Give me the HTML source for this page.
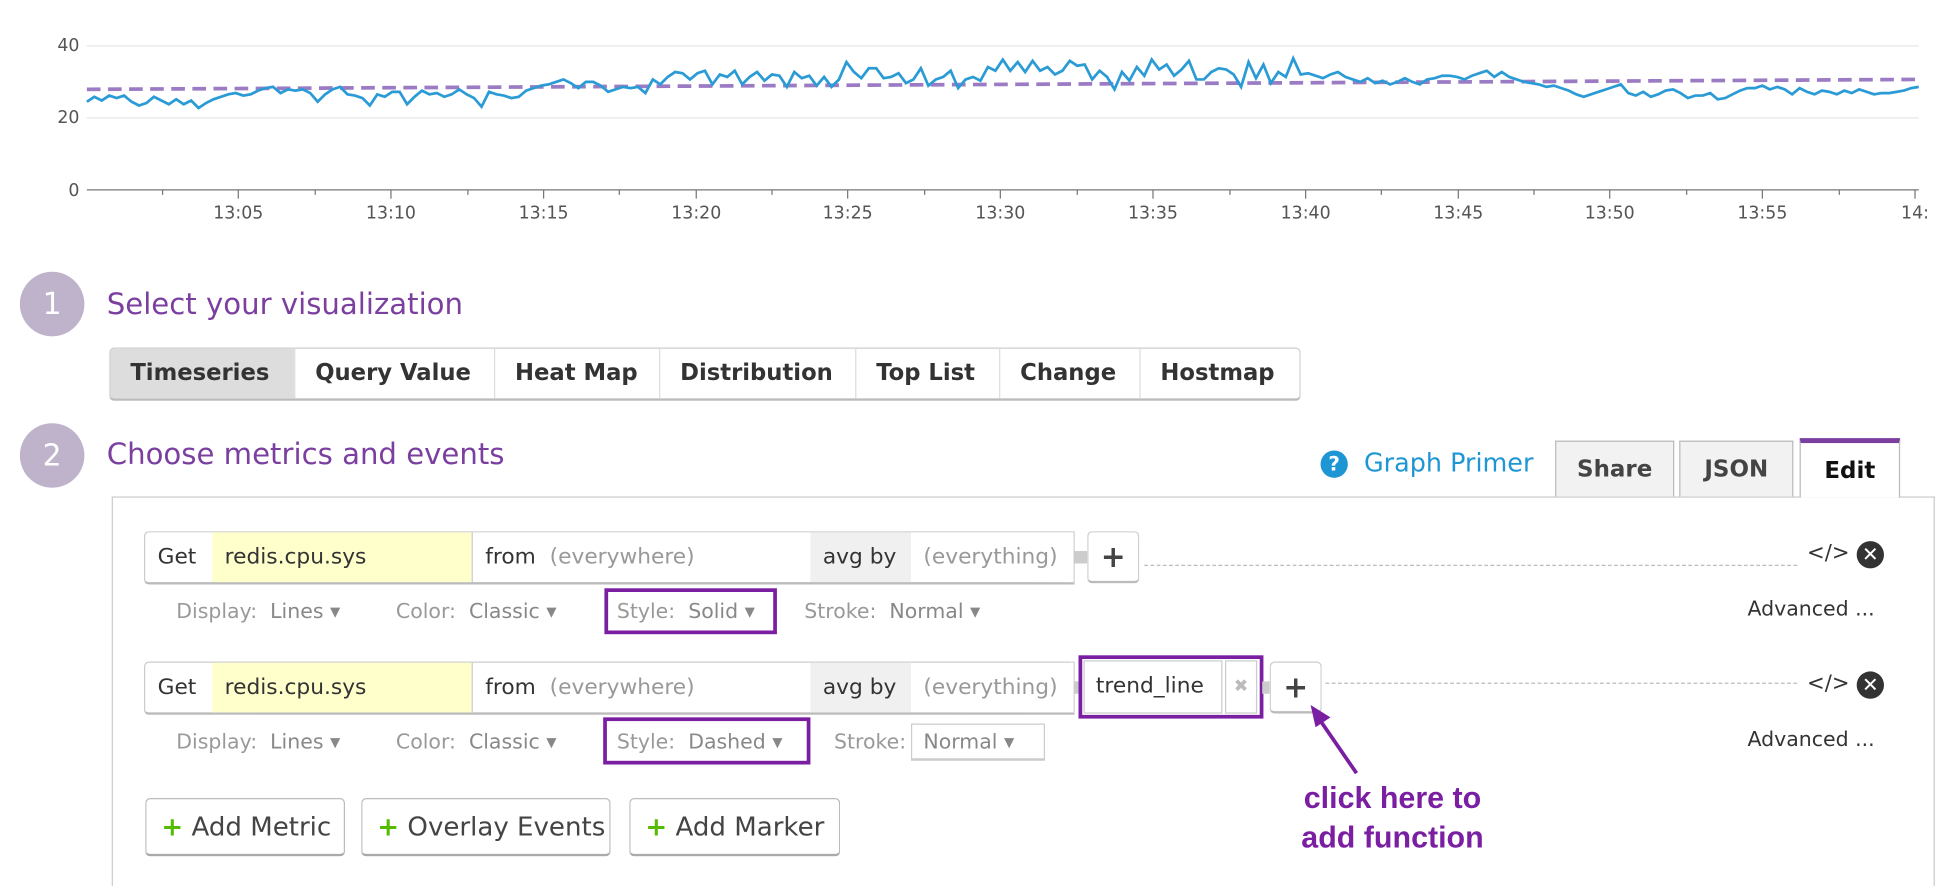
<!DOCTYPE html>
<html><head><meta charset="utf-8"><style>
html,body{margin:0;padding:0;background:#fff;overflow:hidden}
body{width:1946px;height:886px;position:relative}
#s{position:absolute;left:0;top:0;width:1568px;height:714px;overflow:hidden;transform:scale(1.2411);transform-origin:0 0;font-family:"DejaVu Sans","Liberation Sans",sans-serif;color:#333}
.a{position:absolute}
.circ{width:52px;height:52px;border-radius:50%;background:#bfb3cc;color:#fff;font-size:24px;text-align:center;line-height:52px}
.h{font-size:23.5px;color:#7b3fa0;white-space:nowrap}
.tabs{left:88px;top:280px;height:40px;border:1px solid #ccc;border-bottom:2px solid #bbb;border-radius:4px;display:flex;overflow:hidden}
.tabs div{font-weight:bold;font-size:18.3px;line-height:40px;padding:0 0 0 16px;border-left:1px solid #ddd;white-space:nowrap}
.tabs div:first-child{border-left:none;background:#ddd}
.tab{top:355px;height:45px;border:1px solid #bbb;border-bottom:none;background:#f2f2f2;font-weight:bold;font-size:18.5px;text-align:center;line-height:46px;box-sizing:border-box;color:#444}
.row{position:absolute;left:116px;height:40px;border:1px solid #ccc;border-bottom:2px solid #bbb;border-radius:4px 0 0 4px;display:flex;font-size:17.5px;line-height:40px;box-sizing:content-box;width:748px}
.row div{height:40px;white-space:nowrap;box-sizing:border-box;padding-left:10px}
.g{color:#999}
.opt{position:absolute;font-size:16.5px;color:#999;white-space:nowrap;line-height:20px}
.opt b{font-weight:normal;color:#888}
.pb{position:absolute;border:1px solid #ccc;border-bottom:2px solid #bbb;border-radius:4px;background:#fff;box-sizing:border-box;text-align:center;font-weight:bold;font-size:24px;color:#444}
.dot{position:absolute;height:0;border-top:1px dashed #bbb}
.pur{position:absolute;border:3px solid #7a1fa2;box-sizing:border-box}
.btn{position:absolute;top:643px;height:47px;border:1px solid #bbb;border-bottom:2px solid #aaa;border-radius:4px;box-sizing:border-box;font-size:21px;line-height:44px;padding-left:12px;white-space:nowrap;color:#444}
.btn span{color:#5b0;font-weight:bold}
.xc{position:absolute;width:22px;height:22px;border-radius:50%;background:#333;color:#fff;font-size:16px;font-weight:bold;text-align:center;line-height:22px}
</style></head><body><div id="s">
<svg class="a" style="left:0;top:0" width="1568" height="190">
<g font-family="DejaVu Sans,Liberation Sans,sans-serif" font-size="14" fill="#555">
<text x="64" y="41" text-anchor="end">40</text>
<text x="64" y="99" text-anchor="end">20</text>
<text x="64" y="158" text-anchor="end">0</text>
</g>
<line x1="70" y1="37" x2="1546" y2="37" stroke="#eee" stroke-width="1.5"/>
<line x1="70" y1="95" x2="1546" y2="95" stroke="#eee" stroke-width="1.5"/>
<line x1="70" y1="153" x2="1546" y2="153" stroke="#777" stroke-width="1"/>
<g stroke="#777" stroke-width="1">
<line x1="131" y1="153" x2="131" y2="157"/><line x1="192" y1="153" x2="192" y2="160"/><line x1="254" y1="153" x2="254" y2="157"/><line x1="315" y1="153" x2="315" y2="160"/><line x1="377" y1="153" x2="377" y2="157"/><line x1="438" y1="153" x2="438" y2="160"/><line x1="499" y1="153" x2="499" y2="157"/><line x1="561" y1="153" x2="561" y2="160"/><line x1="622" y1="153" x2="622" y2="157"/><line x1="683" y1="153" x2="683" y2="160"/><line x1="745" y1="153" x2="745" y2="157"/><line x1="806" y1="153" x2="806" y2="160"/><line x1="868" y1="153" x2="868" y2="157"/><line x1="929" y1="153" x2="929" y2="160"/><line x1="991" y1="153" x2="991" y2="157"/><line x1="1052" y1="153" x2="1052" y2="160"/><line x1="1113" y1="153" x2="1113" y2="157"/><line x1="1175" y1="153" x2="1175" y2="160"/><line x1="1236" y1="153" x2="1236" y2="157"/><line x1="1297" y1="153" x2="1297" y2="160"/><line x1="1359" y1="153" x2="1359" y2="157"/><line x1="1420" y1="153" x2="1420" y2="160"/><line x1="1482" y1="153" x2="1482" y2="157"/><line x1="1543" y1="153" x2="1543" y2="160"/>
</g>
<g font-family="DejaVu Sans,Liberation Sans,sans-serif" font-size="14" fill="#555" text-anchor="middle">
<text x="192" y="176">13:05</text><text x="315" y="176">13:10</text><text x="438" y="176">13:15</text><text x="561" y="176">13:20</text><text x="683" y="176">13:25</text><text x="806" y="176">13:30</text><text x="929" y="176">13:35</text><text x="1052" y="176">13:40</text><text x="1175" y="176">13:45</text><text x="1297" y="176">13:50</text><text x="1420" y="176">13:55</text><text x="1543" y="176">14:</text>
</g>
<line x1="70" y1="72" x2="1546" y2="64" stroke="#9b7cc4" stroke-width="3" stroke-dasharray="11,6"/>
<polyline fill="none" stroke="#2b9bd6" stroke-width="2.2" points="70,82 76,78 82,81 88,77 94,79 100,77 106,82 112,85 118,83 124,78 130,81 136,84 142,80 148,84 154,81 160,87 166,83 172,80 178,78 184,76 190,75 196,77 202,76 208,73 214,71 220,70 226,75 232,72 238,73 244,72 250,75 256,82 262,76 268,72 274,70 280,76 286,77 292,79 298,85 304,76 310,78 316,74 322,74 328,84 334,78 340,73 346,76 352,75 358,78 364,76 370,72 376,76 382,79 388,86 394,74 400,76 406,77 412,79 418,78 424,73 430,71 436,69 442,68 448,66 454,64 460,67 466,71 472,66 478,66 484,69 490,74 496,72 502,70 508,71 514,70 520,75 526,64 532,68 538,62 544,58 550,59 556,64 562,59 568,57 574,68 580,60 586,62 592,57 598,68 604,62 610,58 616,65 622,60 628,61 634,70 640,58 646,63 652,61 658,69 664,62 670,70 676,64 682,50 688,58 694,63 700,55 706,55 712,63 718,62 724,59 730,67 736,64 742,55 748,69 754,64 760,62 766,57 772,71 778,64 784,62 790,65 796,54 802,57 808,48 814,57 820,50 826,58 832,49 838,57 844,54 850,60 856,57 862,49 868,53 874,52 880,64 886,57 892,62 898,72 904,58 910,65 916,54 922,61 928,48 934,56 940,52 946,61 952,56 958,49 964,64 970,64 976,58 982,55 988,56 994,60 1000,70 1006,50 1012,63 1018,52 1024,67 1030,58 1036,62 1042,47 1048,60 1054,59 1060,61 1066,63 1072,60 1078,58 1084,62 1090,64 1096,66 1102,63 1108,67 1114,65 1120,68 1126,66 1132,63 1138,66 1144,68 1150,64 1156,63 1162,61 1168,61 1174,62 1180,64 1186,61 1192,59 1198,57 1204,62 1210,58 1216,62 1222,64 1228,66 1234,67 1240,68 1246,70 1252,69 1258,71 1264,73 1270,76 1276,78 1282,76 1288,74 1294,72 1300,70 1306,68 1312,75 1318,77 1324,74 1330,78 1336,76 1342,73 1348,72 1354,75 1360,79 1366,77 1372,77 1378,75 1384,80 1390,79 1396,76 1402,73 1408,71 1414,71 1420,69 1426,72 1432,70 1438,72 1444,76 1450,71 1456,74 1462,76 1468,73 1474,74 1480,76 1486,73 1492,75 1498,72 1504,74 1510,76 1516,75 1522,75 1528,74 1534,73 1540,71 1546,70"/>
</svg>

<div class="a circ" style="left:16px;top:219px">1</div>
<div class="a h" style="left:86px;top:231px">Select your visualization</div>
<div class="a tabs"><div style="width:148px;box-sizing:border-box">Timeseries</div><div style="width:161px;box-sizing:border-box">Query Value</div><div style="width:133px;box-sizing:border-box">Heat Map</div><div style="width:158px;box-sizing:border-box">Distribution</div><div style="width:116px;box-sizing:border-box">Top List</div><div style="width:113px;box-sizing:border-box">Change</div><div style="width:129px;box-sizing:border-box">Hostmap</div></div>

<div class="a circ" style="left:16px;top:341px">2</div>
<div class="a h" style="left:86px;top:352px">Choose metrics and events</div>
<div class="a" style="left:1064px;top:363px;width:22px;height:22px;border-radius:50%;background:#1e96d4;color:#fff;font-weight:bold;font-size:16px;text-align:center;line-height:22px">?</div>
<div class="a" style="left:1099px;top:361px;font-size:20.5px;color:#1e96d4;white-space:nowrap">Graph Primer</div>

<div class="a" style="left:90px;top:400px;width:1469px;height:314px;border:1px solid #ccc;border-bottom:none;box-sizing:border-box"></div>
<div class="a tab" style="left:1253px;width:96px">Share</div>
<div class="a tab" style="left:1353px;width:92px">JSON</div>
<div class="a tab" style="left:1450px;top:353px;height:48px;width:81px;background:#fff;border-top:4px solid #7b3fa0;color:#111;line-height:46px">Edit</div>

<div class="row" style="top:428px"><div style="width:54px">Get</div><div style="width:209px;background:#ffffcc">redis.cpu.sys</div><div style="width:273px;border-left:1px solid #ccc">from <span class="g">&nbsp;(everywhere)</span></div><div style="width:81px;background:#f0f0f0">avg by</div><div style="width:131px" class="g">(everything)</div></div>
<div class="a" style="left:865px;top:444px;width:11px;height:10px;background:#ccc"></div>
<div class="pb" style="left:876px;top:428px;width:42px;height:42px;line-height:40px">+</div>
<div class="dot" style="left:922px;top:455px;width:526px"></div>
<div class="a" style="left:1456px;top:436px;font-size:17px;color:#333">&lt;/&gt;</div>
<div class="xc" style="left:1496px;top:436px">✕</div>
<div class="opt" style="left:142px;top:483px">Display: &nbsp;<b>Lines ▾</b></div>
<div class="opt" style="left:319px;top:483px">Color: &nbsp;<b>Classic ▾</b></div>
<div class="pur" style="left:487px;top:474px;width:139px;height:37px"></div>
<div class="opt" style="left:497px;top:483px">Style: &nbsp;<b>Solid ▾</b></div>
<div class="opt" style="left:648px;top:483px">Stroke: &nbsp;<b>Normal ▾</b></div>
<div class="opt" style="left:1408px;top:481px;color:#333">Advanced ...</div>

<div class="row" style="top:533px"><div style="width:54px">Get</div><div style="width:209px;background:#ffffcc">redis.cpu.sys</div><div style="width:273px;border-left:1px solid #ccc">from <span class="g">&nbsp;(everywhere)</span></div><div style="width:81px;background:#f0f0f0">avg by</div><div style="width:131px" class="g">(everything)</div></div>
<div class="a" style="left:865px;top:549px;width:6px;height:10px;background:#ccc"></div>
<div class="pur" style="left:869px;top:528px;width:149px;height:51px"></div>
<div class="a" style="left:873px;top:532px;width:112px;height:43px;border:1px solid #ccc;box-sizing:border-box;font-size:17.5px;line-height:41px;padding-left:9px">trend_line</div>
<div class="a" style="left:987px;top:532px;width:26px;height:43px;border:1px solid #ccc;box-sizing:border-box;color:#bbb;font-size:14px;font-weight:bold;text-align:center;line-height:41px">✖</div>
<div class="a" style="left:1017px;top:549px;width:6px;height:10px;background:#ccc"></div>
<div class="pb" style="left:1023px;top:533px;width:42px;height:42px;line-height:40px">+</div>
<div class="dot" style="left:1068px;top:550px;width:380px"></div>
<div class="a" style="left:1456px;top:541px;font-size:17px;color:#333">&lt;/&gt;</div>
<div class="xc" style="left:1496px;top:541px">✕</div>
<div class="opt" style="left:142px;top:588px">Display: &nbsp;<b>Lines ▾</b></div>
<div class="opt" style="left:319px;top:588px">Color: &nbsp;<b>Classic ▾</b></div>
<div class="pur" style="left:486px;top:578px;width:167px;height:38px"></div>
<div class="opt" style="left:497px;top:588px">Style: &nbsp;<b>Dashed ▾</b></div>
<div class="opt" style="left:672px;top:588px">Stroke:</div>
<div class="a" style="left:734px;top:583px;width:108px;height:30px;border:1px solid #ccc;border-bottom:2px solid #ccc;box-sizing:border-box"></div>
<div class="opt" style="left:744px;top:588px"><b>Normal ▾</b></div>
<div class="opt" style="left:1408px;top:586px;color:#333">Advanced ...</div>

<svg class="a" style="left:1040px;top:560px" width="70" height="70"><line x1="53" y1="63" x2="22" y2="18" stroke="#7a1fa2" stroke-width="3"/><polygon points="16,8 32,18 20,26" fill="#7a1fa2"/></svg>
<div class="a" style="left:1022px;top:628px;width:200px;text-align:center;font-family:'Liberation Sans',sans-serif;font-weight:bold;font-size:24.5px;line-height:32px;color:#7a1fa2">click here to<br>add function</div>

<div class="btn" style="left:117px;width:161px"><span>+</span> Add Metric</div>
<div class="btn" style="left:291px;width:201px"><span>+</span> Overlay Events</div>
<div class="btn" style="left:507px;width:170px"><span>+</span> Add Marker</div>
</div></body></html>
